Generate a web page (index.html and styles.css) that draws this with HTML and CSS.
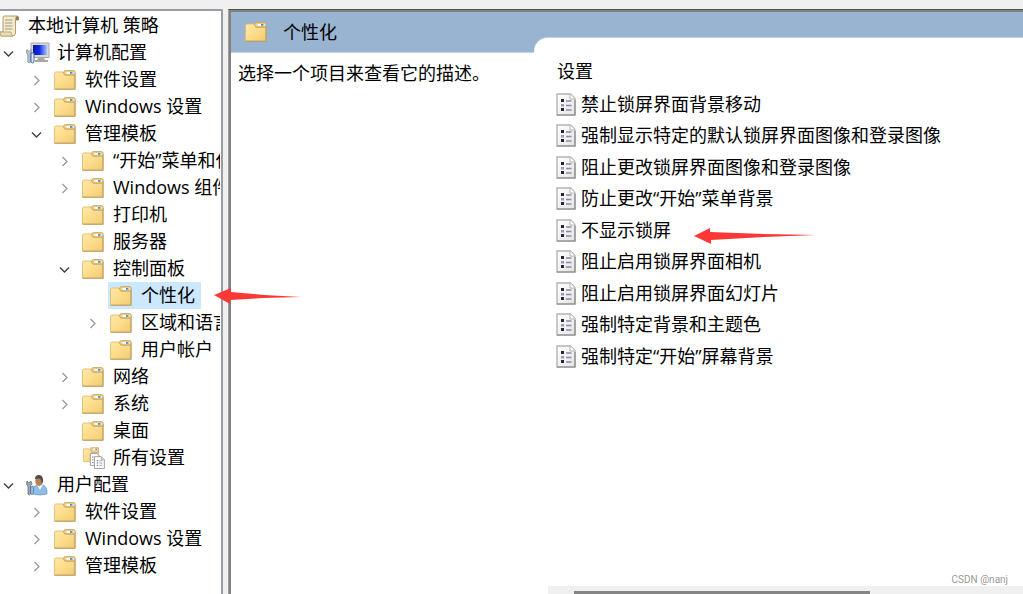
FILE: index.html
```html
<!DOCTYPE html>
<html lang="zh-CN">
<head>
    <meta charset="UTF-8">
    <meta name="viewport" content="width=device-width, initial-scale=1.0">
    <title>本地组策略编辑器</title>
    <link rel="stylesheet" href="styles.css">
</head>
<body>
    <!-- 图标定义 -->
    <svg class="icon-defs" aria-hidden="true">
        <defs>
            <linearGradient id="folderFill" x1="0" y1="0" x2="1" y2="1">
                <stop offset="0" stop-color="#ffe9a8"/>
                <stop offset="0.5" stop-color="#fcdc8a"/>
                <stop offset="1" stop-color="#f0ca74"/>
            </linearGradient>
            <linearGradient id="pageFill" x1="0" y1="0" x2="1" y2="1">
                <stop offset="0" stop-color="#ffffff"/>
                <stop offset="1" stop-color="#e4e4e4"/>
            </linearGradient>
            <linearGradient id="screenFill" x1="0" y1="0" x2="1" y2="0">
                <stop offset="0" stop-color="#0818a8"/>
                <stop offset="0.45" stop-color="#1028e8"/>
                <stop offset="1" stop-color="#a8c4ff"/>
            </linearGradient>
            <symbol id="icon-folder" viewBox="0 0 22 20">
                <path d="M.5 19V3.500Q.5 2 2 2H9L11 5.500H21V19z" fill="url(#folderFill)" stroke="#dcbc74" stroke-width=".9"/>
                <path d="M.5 19.200H21V3" fill="none" stroke="#b89a5c" stroke-width="1.100"/>
                <path d="M9.500 3Q9.500 .6 11.500 .6H19.500Q21.200 .6 21.200 2.500V5H11z" fill="#ecd08c" stroke="#c9a45c" stroke-width=".9"/>
                <path d="M12.500 2H19.500V3.800H12.500z" fill="#fff"/>
                <path d="M16 2H18.500V3.800H16z" fill="#3f96dd"/>
            </symbol>
            <symbol id="icon-page" viewBox="0 0 20 23">
                <path d="M1 1H14.500L19 5.500V22H1z" fill="url(#pageFill)" stroke="#b4b4b4" stroke-width="1.400"/>
                <path d="M14 1V6H19" fill="#fff" stroke="#b4b4b4"/>
                <path d="M1 22H19V7" fill="none" stroke="#8c8c8c" stroke-width="1.200"/>
                <path d="M5 6H8V9H5zM5 15H8V18H5z" fill="#26242c"/>
                <path d="M5 11H8V13.500H5z" fill="#9a96b8"/>
                <path d="M10 8H15.500M10 12.500H15.500M10 17H15.500" stroke="#8c88a8" stroke-width="1.300"/>
            </symbol>
            <symbol id="icon-scroll" viewBox="0 0 20 22">
                <path d="M4 1H17Q19.500 1 18.500 5H15.500V18Q15.500 21 12 21H1Q-1 19 0 17H3V4Q3 1 4 1z" fill="#f5ebcb" stroke="#b39d70"/>
                <path d="M15.500 5Q15 1.500 17 1.200Q19 1.500 18.500 5z" fill="#8f7950"/>
                <path d="M0 17H11Q11.500 21 13 21H1z" fill="#ecdfb6" stroke="#b39d70" stroke-width=".8"/>
                <path d="M5 5H12.500M5 8H12.500M5 11H12.500M5 14H12.500" stroke="#a09b88"/>
            </symbol>
            <symbol id="icon-computer" viewBox="0 0 24 22">
                <path d="M5 1H23V15.500H5z" fill="#d8d8d4" stroke="#a8a8a4"/>
                <path d="M7 3H21V13H7z" fill="url(#screenFill)"/>
                <path d="M12 16H18L19 18H22V20H9V18H11z" fill="#a9a9a4"/>
                <path d="M.8 7.500L3 9.500L5 7.500V11L4.500 13V20Q3 22 1.800 20V13L.2 10z" fill="#b7c0c8" stroke="#7d8890" stroke-width=".7"/>
                <path d="M5 11H8V20Q6.500 22 5 20z" fill="#e2edf7" stroke="#326ba8"/>
            </symbol>
            <symbol id="icon-user" viewBox="0 0 24 22">
                <path d="M7 20V16Q7 12 11 11H17Q21.500 13 21 20Q14 22 7 20z" fill="#8fbce9" stroke="#6591bf" stroke-width=".7"/>
                <path d="M11 11L14 16L17 11z" fill="#e8f2fb"/>
                <ellipse cx="13" cy="7" rx="3.700" ry="5" fill="#b87f51"/>
                <path d="M9 5Q9 1 13 1Q17.500 1 17 8L15.500 10Q16 5 13 4.500Q10 4.500 9 5z" fill="#4b4c4c"/>
                <path d="M1 7L2.800 9L4.800 7L6 9.500L4.500 12V20Q3.500 22 2 20V12L.5 10z" fill="#9ba6af" stroke="#59636b" stroke-width=".7"/>
                <path d="M5 13L7 12V20Q6 21 5 20z" fill="#d9eaff" stroke="#326ba8" stroke-width=".8"/>
            </symbol>
            <symbol id="icon-all" viewBox="0 0 24 24">
                <path d="M.5 15V2H7L9 4.500H17V16H.5z" fill="url(#folderFill)" stroke="#d9b86c" stroke-width=".8"/>
                <path d="M8.500 3V.8H17V6H9.500z" fill="#ecd08c" stroke="#c9a45c" stroke-width=".8"/>
                <path d="M11 2.500H16" stroke="#fff" stroke-width="1.500"/>
                <path d="M13.500 2.500H15.500" stroke="#3f96dd" stroke-width="1.500"/>
                <path d="M8 7H15L18 10V20H8z" fill="#fff" stroke="#999"/>
                <path d="M10 11H11.500M10 14H11.500M10 17H11.500" stroke="#666"/>
                <path d="M12.500 10.500H20L23.300 14V23.500H12.500z" fill="#fff" stroke="#999"/>
                <path d="M20 10.500V14H23.300" fill="#ddd" stroke="#999" stroke-width=".7"/>
                <path d="M15 15H16.500M15 17.500H16.500M15 20H16.500" stroke="#555"/>
                <path d="M18 15H21M18 17.500H21M18 20H21" stroke="#9793b4"/>
            </symbol>
            <symbol id="icon-right" viewBox="0 0 16 16">
                <path d="M6.500 4L11 8.500L6.500 13" fill="none" stroke="#989898" stroke-width="1.300"/>
            </symbol>
            <symbol id="icon-down" viewBox="0 0 16 16">
                <path d="M4 6.500L8.500 11L13 6.500" fill="none" stroke="#404040" stroke-width="1.400"/>
            </symbol>
        </defs>
    </svg>

    <div class="window">
        <!-- 左侧策略树 -->
        <nav class="tree-pane" aria-label="策略">
            <a class="tree-root" href="#"><svg class="icon-root"><use href="#icon-scroll"/></svg>本地计算机 策略</a>
            <ul class="tree">
                <li>
                    <div class="node"><button class="toggle" aria-label="折叠" aria-expanded="true"><svg><use href="#icon-down"/></svg></button><a class="label" href="#"><svg class="icon-tall"><use href="#icon-computer"/></svg>计算机配置</a></div>
                    <ul>
                        <li><div class="node"><button class="toggle" aria-label="展开" aria-expanded="false"><svg><use href="#icon-right"/></svg></button><a class="label" href="#"><svg class="icon"><use href="#icon-folder"/></svg>软件设置</a></div></li>
                        <li><div class="node"><button class="toggle" aria-label="展开" aria-expanded="false"><svg><use href="#icon-right"/></svg></button><a class="label" href="#"><svg class="icon"><use href="#icon-folder"/></svg>Windows 设置</a></div></li>
                        <li>
                            <div class="node"><button class="toggle" aria-label="折叠" aria-expanded="true"><svg><use href="#icon-down"/></svg></button><a class="label" href="#"><svg class="icon"><use href="#icon-folder"/></svg>管理模板</a></div>
                            <ul>
                                <li><div class="node"><button class="toggle" aria-label="展开" aria-expanded="false"><svg><use href="#icon-right"/></svg></button><a class="label" href="#"><svg class="icon"><use href="#icon-folder"/></svg>“开始”菜单和任务栏</a></div></li>
                                <li><div class="node"><button class="toggle" aria-label="展开" aria-expanded="false"><svg><use href="#icon-right"/></svg></button><a class="label" href="#"><svg class="icon"><use href="#icon-folder"/></svg>Windows 组件</a></div></li>
                                <li><div class="node leaf"><a class="label" href="#"><svg class="icon"><use href="#icon-folder"/></svg>打印机</a></div></li>
                                <li><div class="node leaf"><a class="label" href="#"><svg class="icon"><use href="#icon-folder"/></svg>服务器</a></div></li>
                                <li>
                                    <div class="node"><button class="toggle" aria-label="折叠" aria-expanded="true"><svg><use href="#icon-down"/></svg></button><a class="label" href="#"><svg class="icon"><use href="#icon-folder"/></svg>控制面板</a></div>
                                    <ul>
                                        <li><div class="node leaf"><a class="label selected" href="#"><svg class="icon"><use href="#icon-folder"/></svg>个性化</a></div></li>
                                        <li><div class="node"><button class="toggle" aria-label="展开" aria-expanded="false"><svg><use href="#icon-right"/></svg></button><a class="label" href="#"><svg class="icon"><use href="#icon-folder"/></svg>区域和语言选项</a></div></li>
                                        <li><div class="node leaf"><a class="label" href="#"><svg class="icon"><use href="#icon-folder"/></svg>用户帐户</a></div></li>
                                    </ul>
                                </li>
                                <li><div class="node"><button class="toggle" aria-label="展开" aria-expanded="false"><svg><use href="#icon-right"/></svg></button><a class="label" href="#"><svg class="icon"><use href="#icon-folder"/></svg>网络</a></div></li>
                                <li><div class="node"><button class="toggle" aria-label="展开" aria-expanded="false"><svg><use href="#icon-right"/></svg></button><a class="label" href="#"><svg class="icon"><use href="#icon-folder"/></svg>系统</a></div></li>
                                <li><div class="node leaf"><a class="label" href="#"><svg class="icon"><use href="#icon-folder"/></svg>桌面</a></div></li>
                                <li><div class="node leaf"><a class="label" href="#"><svg class="icon-tall"><use href="#icon-all"/></svg>所有设置</a></div></li>
                            </ul>
                        </li>
                    </ul>
                </li>
                <li>
                    <div class="node"><button class="toggle" aria-label="折叠" aria-expanded="true"><svg><use href="#icon-down"/></svg></button><a class="label" href="#"><svg class="icon-tall"><use href="#icon-user"/></svg>用户配置</a></div>
                    <ul>
                        <li><div class="node"><button class="toggle" aria-label="展开" aria-expanded="false"><svg><use href="#icon-right"/></svg></button><a class="label" href="#"><svg class="icon"><use href="#icon-folder"/></svg>软件设置</a></div></li>
                        <li><div class="node"><button class="toggle" aria-label="展开" aria-expanded="false"><svg><use href="#icon-right"/></svg></button><a class="label" href="#"><svg class="icon"><use href="#icon-folder"/></svg>Windows 设置</a></div></li>
                        <li><div class="node"><button class="toggle" aria-label="展开" aria-expanded="false"><svg><use href="#icon-right"/></svg></button><a class="label" href="#"><svg class="icon"><use href="#icon-folder"/></svg>管理模板</a></div></li>
                    </ul>
                </li>
            </ul>
        </nav>

        <!-- 右侧详情 -->
        <main class="detail-pane">
            <section class="description">
                <h1 class="title"><svg class="icon"><use href="#icon-folder"/></svg>个性化</h1>
                <p>选择一个项目来查看它的描述。</p>
            </section>
            <section class="settings">
                <div class="sheet">
                    <table>
                        <thead>
                            <tr><th scope="col">设置</th></tr>
                        </thead>
                        <tbody>
                            <tr><td><a href="#"><svg class="icon-page"><use href="#icon-page"/></svg>禁止锁屏界面背景移动</a></td></tr>
                            <tr><td><a href="#"><svg class="icon-page"><use href="#icon-page"/></svg>强制显示特定的默认锁屏界面图像和登录图像</a></td></tr>
                            <tr><td><a href="#"><svg class="icon-page"><use href="#icon-page"/></svg>阻止更改锁屏界面图像和登录图像</a></td></tr>
                            <tr><td><a href="#"><svg class="icon-page"><use href="#icon-page"/></svg>防止更改“开始”菜单背景</a></td></tr>
                            <tr><td><a href="#"><svg class="icon-page"><use href="#icon-page"/></svg>不显示锁屏</a></td></tr>
                            <tr><td><a href="#"><svg class="icon-page"><use href="#icon-page"/></svg>阻止启用锁屏界面相机</a></td></tr>
                            <tr><td><a href="#"><svg class="icon-page"><use href="#icon-page"/></svg>阻止启用锁屏界面幻灯片</a></td></tr>
                            <tr><td><a href="#"><svg class="icon-page"><use href="#icon-page"/></svg>强制特定背景和主题色</a></td></tr>
                            <tr><td><a href="#"><svg class="icon-page"><use href="#icon-page"/></svg>强制特定“开始”屏幕背景</a></td></tr>
                        </tbody>
                    </table>
                    <div class="scrollbar"><div class="thumb"></div></div>
                </div>
            </section>
        </main>
    </div>

    <!-- 红色标注箭头 -->
    <svg class="arrow arrow-tree" viewBox="0 0 87 16" aria-hidden="true"><path d="M0 7L17 0V4L50 7L87 9L50 10L16 12V16z"/></svg>
    <svg class="arrow arrow-setting" viewBox="0 0 122 16" aria-hidden="true"><path d="M0 8L16 0V4L70 6L122 7L70 9L17 12V16z"/></svg>
    <span class="watermark">CSDN @nanj</span>
</body>
</html>
```

FILE: styles.css
```css
:root {
    --header-blue: #99b4d1;
    --frame-gray: #f0f0f0;
}

* {
    box-sizing: border-box;
}

body {
    margin: 0;
    height: 100vh;
    position: relative;
    overflow: hidden;
    background: var(--frame-gray);
    color: #000;
    font-family: "Open Sans", "Noto Sans CJK SC", sans-serif;
    font-size: 18px;
    line-height: 27px;
}

a {
    color: inherit;
    text-decoration: none;
}

ul {
    list-style: none;
    margin: 0;
    padding: 0;
}

svg {
    flex: none;
}

.icon-defs {
    position: absolute;
    width: 0;
    height: 0;
}

.icon {
    width: 22px;
    height: 20px;
}

.icon-tall {
    width: 24px;
    height: 22px;
    margin-right: -2px;
}

.icon-root {
    width: 20px;
    height: 22px;
}

.icon-page {
    width: 20px;
    height: 23px;
}

.window {
    display: flex;
    gap: 5px;
    height: 100%;
    padding-top: 9px;
}

/* 策略树 */
.tree-pane {
    flex: 0 0 223px;
    overflow: hidden;
    padding: 1px 1px 0 0;
    background: #fff;
    border-top: 2px solid #9a9da3;
    border-right: 2px solid #9a9da3;
    white-space: nowrap;
}

.tree-root {
    display: flex;
    align-items: center;
    gap: 8px;
    height: 27px;
}

.tree {
    overflow: hidden;
}

.tree ul {
    padding-left: 28px;
}

.node {
    display: flex;
    align-items: center;
    gap: 8px;
    height: 27px;
}

.leaf {
    padding-left: 24px;
}

.toggle {
    flex: none;
    width: 16px;
    height: 16px;
    padding: 0;
    border: none;
    background: none;
    cursor: pointer;
}

.toggle svg {
    display: block;
    width: 16px;
    height: 16px;
}

.label {
    display: flex;
    align-items: center;
    gap: 9px;
    height: 27px;
    padding: 0 6px 0 2px;
}

.selected {
    background: #cce8ff;
}

/* 详情面板 */
.detail-pane {
    flex: 1;
    display: flex;
    min-width: 0;
    padding: 2px 0 0 2px;
    background: #808080;
    border-top: 1px solid #505050;
    border-left: 1px solid #a0a0a0;
}

.description {
    flex: 0 0 303px;
    background: #fff;
}

.title {
    display: flex;
    align-items: center;
    gap: 16px;
    height: 41px;
    margin: 0;
    padding-left: 14px;
    background: var(--header-blue);
    border-bottom: 1px solid #c5d4e5;
    font-size: 18px;
    font-weight: normal;
}

.description p {
    margin: 0;
    padding: 7px;
}

.settings {
    flex: 1;
    display: flex;
    min-width: 0;
    padding-top: 25px;
    background: var(--header-blue);
}

.sheet {
    flex: 1;
    display: flex;
    flex-direction: column;
    justify-content: space-between;
    min-width: 0;
    padding: 16px 0 0 14px;
    background: #fff;
    border-top: 1px solid #c5d4e5;
    border-top-left-radius: 14px;
}

table {
    border-collapse: collapse;
    margin-left: 8px;
    white-space: nowrap;
}

th {
    height: 34px;
    padding: 0 1px;
    font-weight: normal;
    text-align: left;
}

td {
    height: 31px;
    padding: 0;
}

tr:nth-child(odd) td {
    height: 32px;
}

td a {
    display: flex;
    align-items: center;
    gap: 5px;
}

.scrollbar {
    height: 8px;
    padding: 5px 0 0 26px;
    background: var(--frame-gray);
}

.thumb {
    width: 66%;
    height: 3px;
    background: #858585;
}

/* 标注 */
.arrow {
    position: absolute;
    height: 16px;
    fill: #fb3836;
}

.arrow-tree {
    left: 214px;
    top: 288px;
    width: 87px;
}

.arrow-setting {
    left: 694px;
    top: 228px;
    width: 122px;
}

.watermark {
    position: absolute;
    right: 15px;
    bottom: 6px;
    color: #999;
    font-family: Roboto, sans-serif;
    font-size: 10px;
    line-height: 16px;
}
```
